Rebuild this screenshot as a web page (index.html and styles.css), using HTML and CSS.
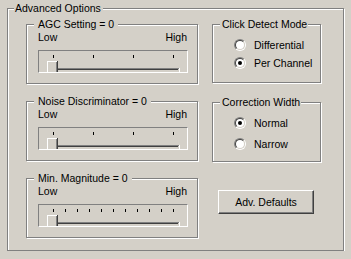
FILE: index.html
```html
<!DOCTYPE html>
<html lang="en">
<head>
  <meta charset="UTF-8" />
  <title>Advanced Options</title>
  <link rel="stylesheet" href="styles.css">
</head>
<body>
  <div class="window">
    <fieldset class="group outer">
      <legend>Advanced Options</legend>
      <div class="columns">

        <div class="col col-left">
          <fieldset class="group slider-group">
            <legend>AGC Setting = 0</legend>
            <div class="range-labels"><span>Low</span><span>High</span></div>
            <div class="slider">
              <svg width="148" height="21" viewBox="0 0 148 21" shape-rendering="crispEdges">
                <g fill="#000">
                  <rect x="14" y="4" width="1" height="3"/>
                  <rect x="54" y="4" width="1" height="3"/>
                  <rect x="94" y="4" width="1" height="3"/>
                  <rect x="134" y="4" width="1" height="3"/>
                </g>
                <rect x="8" y="17" width="132" height="1" fill="#808080"/>
                <rect x="8" y="18" width="1" height="3" fill="#808080"/>
                <rect x="9" y="18" width="130" height="1" fill="#404040"/>
                <rect x="140" y="17" width="1" height="4" fill="#fff"/>
                <rect x="8" y="10" width="11" height="11" fill="#d4d0c8"/>
                <rect x="8" y="10" width="10" height="1" fill="#fff"/>
                <rect x="8" y="10" width="1" height="11" fill="#fff"/>
                <rect x="17" y="11" width="1" height="10" fill="#808080"/>
                <rect x="18" y="10" width="1" height="11" fill="#404040"/>
              </svg>
            </div>
          </fieldset>

          <fieldset class="group slider-group">
            <legend>Noise Discriminator = 0</legend>
            <div class="range-labels"><span>Low</span><span>High</span></div>
            <div class="slider">
              <svg width="148" height="21" viewBox="0 0 148 21" shape-rendering="crispEdges">
                <g fill="#000">
                  <rect x="14" y="4" width="1" height="3"/>
                  <rect x="54" y="4" width="1" height="3"/>
                  <rect x="94" y="4" width="1" height="3"/>
                  <rect x="134" y="4" width="1" height="3"/>
                </g>
                <rect x="8" y="17" width="132" height="1" fill="#808080"/>
                <rect x="8" y="18" width="1" height="3" fill="#808080"/>
                <rect x="9" y="18" width="130" height="1" fill="#404040"/>
                <rect x="140" y="17" width="1" height="4" fill="#fff"/>
                <rect x="8" y="10" width="11" height="11" fill="#d4d0c8"/>
                <rect x="8" y="10" width="10" height="1" fill="#fff"/>
                <rect x="8" y="10" width="1" height="11" fill="#fff"/>
                <rect x="17" y="11" width="1" height="10" fill="#808080"/>
                <rect x="18" y="10" width="1" height="11" fill="#404040"/>
              </svg>
            </div>
          </fieldset>

          <fieldset class="group slider-group">
            <legend>Min. Magnitude = 0</legend>
            <div class="range-labels"><span>Low</span><span>High</span></div>
            <div class="slider">
              <svg width="148" height="21" viewBox="0 0 148 21" shape-rendering="crispEdges">
                <g fill="#000">
                  <rect x="14" y="4" width="1" height="3"/>
                  <rect x="26" y="4" width="1" height="3"/>
                  <rect x="38" y="4" width="1" height="3"/>
                  <rect x="50" y="4" width="1" height="3"/>
                  <rect x="62" y="4" width="1" height="3"/>
                  <rect x="74" y="4" width="1" height="3"/>
                  <rect x="86" y="4" width="1" height="3"/>
                  <rect x="98" y="4" width="1" height="3"/>
                  <rect x="110" y="4" width="1" height="3"/>
                  <rect x="122" y="4" width="1" height="3"/>
                  <rect x="134" y="4" width="1" height="3"/>
                </g>
                <rect x="8" y="17" width="132" height="1" fill="#808080"/>
                <rect x="8" y="18" width="1" height="3" fill="#808080"/>
                <rect x="9" y="18" width="130" height="1" fill="#404040"/>
                <rect x="140" y="17" width="1" height="4" fill="#fff"/>
                <rect x="8" y="10" width="11" height="11" fill="#d4d0c8"/>
                <rect x="8" y="10" width="10" height="1" fill="#fff"/>
                <rect x="8" y="10" width="1" height="11" fill="#fff"/>
                <rect x="17" y="11" width="1" height="10" fill="#808080"/>
                <rect x="18" y="10" width="1" height="11" fill="#404040"/>
              </svg>
            </div>
          </fieldset>
        </div>

        <div class="col col-right">
          <fieldset class="group radio-group detect-group">
            <legend>Click Detect Mode</legend>
            <div class="options">
              <label class="option"><span class="radio"><span class="radio-in"></span></span>Differential</label>
              <label class="option"><span class="radio checked"><span class="radio-in"></span></span>Per Channel</label>
            </div>
          </fieldset>

          <fieldset class="group radio-group width-group">
            <legend>Correction Width</legend>
            <div class="options">
              <label class="option"><span class="radio checked"><span class="radio-in"></span></span>Normal</label>
              <label class="option"><span class="radio"><span class="radio-in"></span></span>Narrow</label>
            </div>
          </fieldset>

          <button class="btn">Adv. Defaults</button>
        </div>

      </div>
    </fieldset>
  </div>
</body>
</html>
```

FILE: styles.css
```css
* {
  box-sizing: border-box;
}

body {
  margin: 0;
  background: #d4d0c8;
  color: #000;
  font-family: "Liberation Sans", Arial, sans-serif;
  font-size: 10.5px;
}

.window {
  padding: 2px 7px 0;
}

/* etched group box */
.group {
  margin: 0;
  padding: 0;
  min-width: 0;
  border: 1px solid #808080;
  box-shadow: 1px 1px 0 #fff, inset 1px 1px 0 #fff;
}

.group > legend {
  height: 13px;
  line-height: 13px;
  margin-left: 7px;
  padding: 0 1px 0 2px;
  background: #d4d0c8;
  white-space: nowrap;
}

.outer > legend {
  margin-left: 6px;
  padding: 0 2px 0 1px;
}

.columns {
  display: grid;
  grid-template-columns: 172px 109px;
  column-gap: 14px;
  padding: 3px 0 12px 18px;
}

.col {
  display: flex;
  flex-direction: column;
}

.col-left {
  gap: 11px;
}

/* sliders */
.slider-group {
  height: 66px;
}

.slider-group > legend {
  padding: 0 4px;
}

.range-labels {
  display: flex;
  justify-content: space-between;
  line-height: 12px;
  padding: 0 10px 0 11px;
}

.slider {
  width: 150px;
  height: 23px;
  margin: 7px 0 0 11px;
  border: 1px solid;
  border-color: #808080 #fff #fff #808080;
}

.slider svg {
  display: block;
}

/* radio groups */
.detect-group {
  height: 65px;
  margin-bottom: 13px;
}

.width-group {
  height: 66px;
}

.options {
  display: flex;
  flex-direction: column;
  gap: 6px;
  padding: 8px 0 0 21px;
}

.width-group .options {
  gap: 9px;
}

.option {
  display: flex;
  align-items: center;
  gap: 8px;
  height: 12px;
  line-height: 13px;
}

.radio {
  width: 12px;
  height: 12px;
  border-radius: 50%;
  border: 1px solid;
  border-color: #808080 #fff #fff #808080;
  display: flex;
  align-items: center;
  justify-content: center;
}

.radio-in {
  width: 10px;
  height: 10px;
  border-radius: 50%;
  border: 1px solid;
  border-color: #404040 #d4d0c8 #d4d0c8 #404040;
  background: #fff;
  display: flex;
  align-items: center;
  justify-content: center;
}

.radio.checked .radio-in::after {
  content: "";
  width: 4px;
  height: 4px;
  border-radius: 50%;
  background: #000;
}

/* push button */
.btn {
  width: 96px;
  height: 24px;
  margin: 28px 0 0 6px;
  padding: 0;
  background: #d4d0c8;
  border: 1px solid;
  border-color: #fff #404040 #404040 #fff;
  box-shadow: inset -1px -1px 0 #808080;
  font-family: inherit;
  font-size: 10.5px;
  color: #000;
}
```
